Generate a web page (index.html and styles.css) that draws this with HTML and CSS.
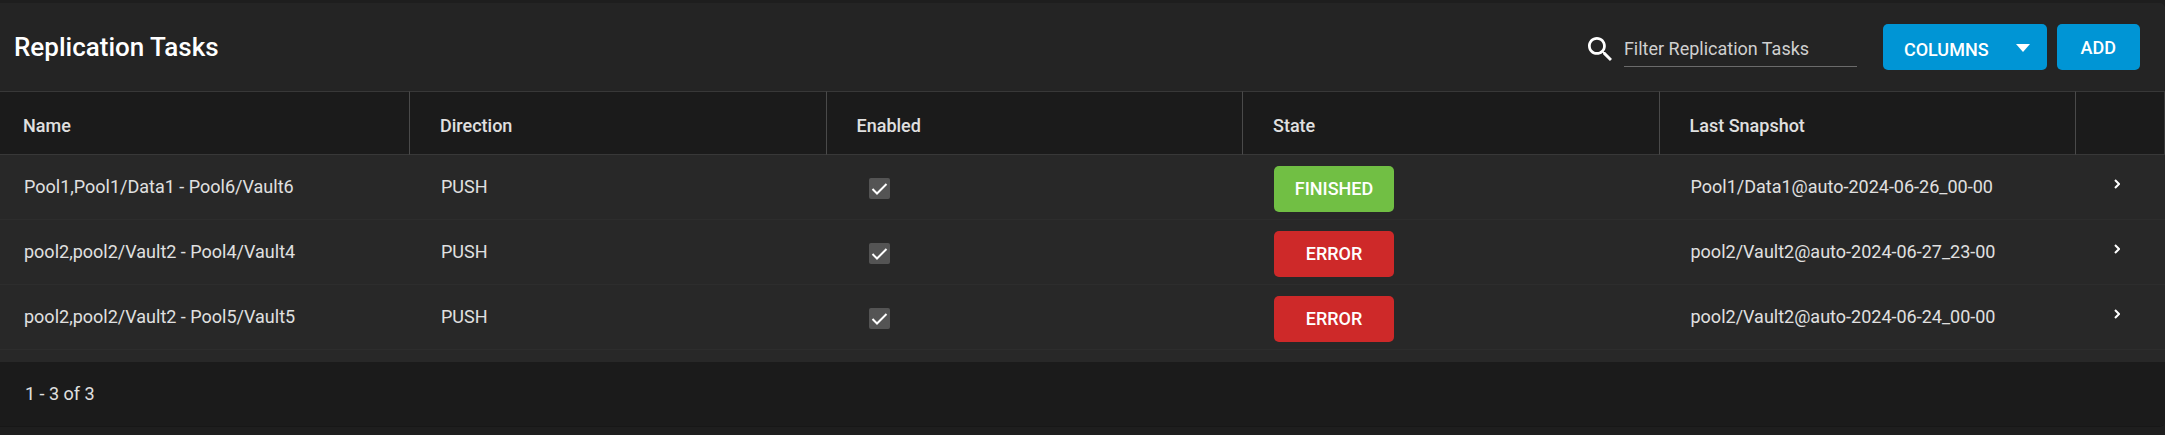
FILE: index.html
```html
<!DOCTYPE html>
<html lang="en">
<head>
<meta charset="utf-8">
<title>Replication Tasks</title>
<link rel="stylesheet" href="styles.css">
</head>
<body>
<main class="card">
  <header class="toolbar">
    <h1 class="title">Replication Tasks</h1>
    <div class="actions">
      <div class="search">
        <svg class="search-icon" viewBox="3 3 17.5 17.5" aria-hidden="true"><path d="M15.5 14h-.79l-.28-.27C15.41 12.59 16 11.11 16 9.5 16 5.91 13.09 3 9.5 3S3 5.91 3 9.5 5.91 16 9.5 16c1.61 0 3.09-.59 4.23-1.57l.27.28v.79l5 4.99L20.49 19l-4.99-5zm-6 0C7.01 14 5 11.99 5 9.5S7.01 5 9.5 5 14 7.01 14 9.5 11.99 14 9.5 14z"/></svg>
        <input class="search-input" type="text" placeholder="Filter Replication Tasks" aria-label="Filter Replication Tasks">
      </div>
      <button class="btn btn-columns" type="button">COLUMNS
        <svg class="caret" viewBox="0 0 14 8" aria-hidden="true"><path d="M0 0h14L7 8z"/></svg>
      </button>
      <button class="btn btn-add" type="button">ADD</button>
    </div>
  </header>
  <table class="tasks">
    <colgroup><col class="col-name"><col class="col-data"><col class="col-data"><col class="col-data"><col class="col-data"><col class="col-expand"></colgroup>
    <thead>
      <tr><th>Name</th><th>Direction</th><th>Enabled</th><th>State</th><th>Last Snapshot</th><th></th></tr>
    </thead>
    <tbody>
      <tr>
        <td>Pool1,Pool1/Data1 - Pool6/Vault6</td><td>PUSH</td>
        <td><input class="check" type="checkbox" checked aria-label="Enabled"></td>
        <td><button class="state state-finished" type="button">FINISHED</button></td>
        <td>Pool1/Data1@auto-2024-06-26_00-00</td>
        <td><button class="expand" type="button" aria-label="Expand row"><svg viewBox="0 0 6 10" aria-hidden="true"><path d="M1 1l4 4-4 4"/></svg></button></td>
      </tr>
      <tr>
        <td>pool2,pool2/Vault2 - Pool4/Vault4</td><td>PUSH</td>
        <td><input class="check" type="checkbox" checked aria-label="Enabled"></td>
        <td><button class="state state-error" type="button">ERROR</button></td>
        <td>pool2/Vault2@auto-2024-06-27_23-00</td>
        <td><button class="expand" type="button" aria-label="Expand row"><svg viewBox="0 0 6 10" aria-hidden="true"><path d="M1 1l4 4-4 4"/></svg></button></td>
      </tr>
      <tr>
        <td>pool2,pool2/Vault2 - Pool5/Vault5</td><td>PUSH</td>
        <td><input class="check" type="checkbox" checked aria-label="Enabled"></td>
        <td><button class="state state-error" type="button">ERROR</button></td>
        <td>pool2/Vault2@auto-2024-06-24_00-00</td>
        <td><button class="expand" type="button" aria-label="Expand row"><svg viewBox="0 0 6 10" aria-hidden="true"><path d="M1 1l4 4-4 4"/></svg></button></td>
      </tr>
    </tbody>
  </table>
  <footer class="footer">1 - 3 of 3</footer>
</main>
</body>
</html>
```
FILE: styles.css
```css
* { box-sizing: border-box; }
body {
  margin: 0;
  padding-top: 3px;
  background: #1e1e1e;
  color: #e0e0e0;
  font-family: Roboto, sans-serif;
  font-size: 18px;
  line-height: 24px;
}
button, input { font: inherit; }
.card {
  background: #282828;
  border-radius: 0 6px 6px 0;
  overflow: hidden;
  border-bottom: 1px solid #171717;
}
.toolbar {
  display: flex;
  align-items: center;
  justify-content: space-between;
  height: 88px;
  padding: 0 25px 0 14px;
  background: #242424;
}
.title {
  margin: 0;
  color: #fff;
  font-size: 26px;
  font-weight: 500;
  line-height: 32px;
}
.actions { display: flex; align-items: center; }
.search { display: flex; align-items: center; gap: 12px; margin-right: 26px; }
.search-icon { width: 24px; height: 24px; margin-top: 4px; fill: #fff; }
.search-input {
  width: 233px;
  height: 40px;
  padding: 6px 0 2px;
  border: 0;
  border-bottom: 1px solid #6b6b6b;
  background: none;
  color: #e0e0e0;
}
.search-input::placeholder { color: #d0d0d0; opacity: 1; }
.btn, .state {
  height: 46px;
  border: 0;
  border-radius: 5px;
  color: #fff;
  font-weight: 500;
}
.btn { background: #0095d5; }
.btn-columns {
  display: flex;
  align-items: center;
  gap: 27px;
  margin-right: 10px;
  padding: 5px 17px 0 21px;
}
.caret { width: 14px; height: 8px; margin-bottom: 4px; fill: #fff; }
.btn-add { padding: 1px 24px 0; }
.tasks {
  width: 100%;
  table-layout: fixed;
  border-collapse: separate;
  border-spacing: 0;
}
.col-name { width: 410px; }
.col-expand { width: 89px; }
.tasks th {
  height: 64px;
  padding: 6px 0 0 30px;
  border: 1px solid #383838;
  border-width: 1px 0;
  border-right: 1px solid #4a4a4a;
  background: #1b1b1b;
  font-weight: 500;
  text-align: left;
}
.tasks th:first-child { padding-left: 23px; }
.tasks th:last-child { border-right-color: #383838; }
.tasks td {
  height: 65px;
  padding: 0 0 0 31px;
  border-bottom: 1px solid #2d2d2d;
}
.tasks td:first-child { padding-left: 24px; }
.check {
  display: block;
  width: 21px;
  height: 21px;
  margin: 3px 0 0 11px;
  appearance: none;
  border-radius: 2px;
  background: #545454 url("data:image/svg+xml,%3Csvg xmlns='http://www.w3.org/2000/svg' viewBox='0 0 21 21'%3E%3Cpath d='M3.5 11l4.5 4.500L17.500 6' fill='none' stroke='white' stroke-width='2'/%3E%3C/svg%3E");
}
.state { display: block; width: 120px; margin-top: 3px; padding: 1px 0 0; }
.state-finished { background: #71bf44; }
.state-error { background: #ce2929; }
.expand {
  display: block;
  margin-bottom: 6px;
  padding: 4px 7px;
  border: 0;
  background: none;
}
.expand svg { display: block; width: 6px; height: 10px; fill: none; stroke: #fff; stroke-width: 2; }
.footer {
  height: 64px;
  margin-top: 12px;
  padding: 20px 25px;
  background: #1b1b1b;
}
```
